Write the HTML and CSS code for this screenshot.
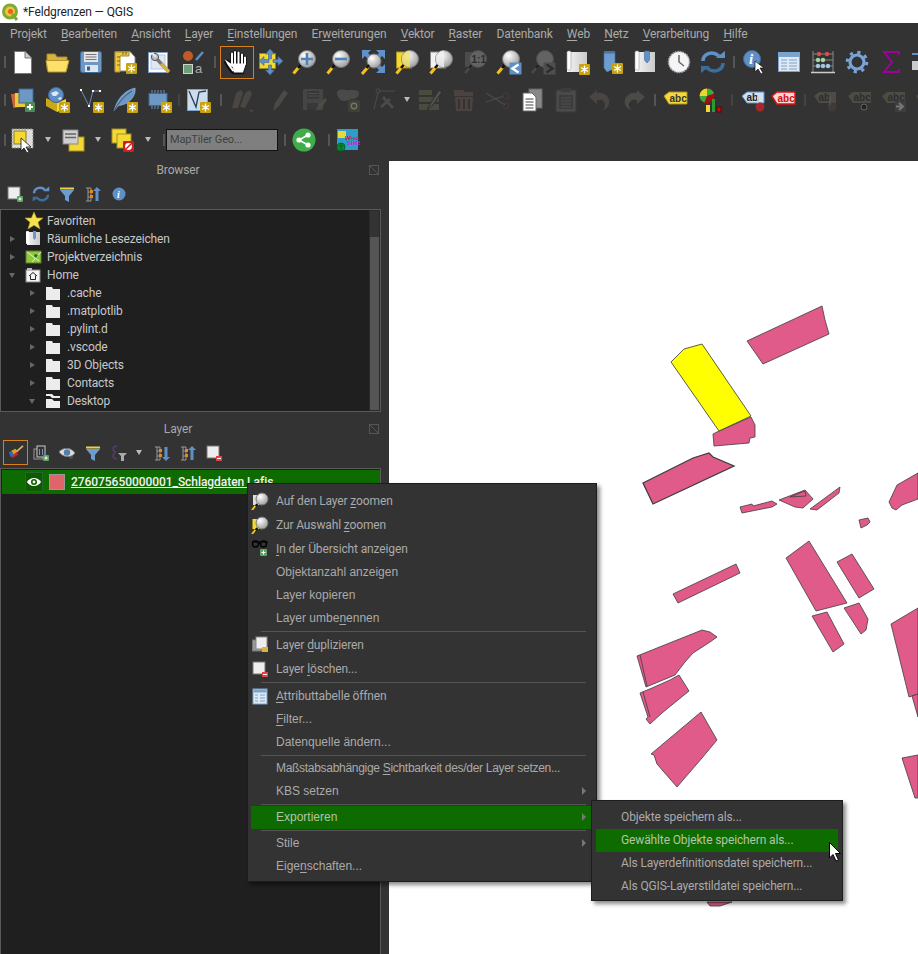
FILE: index.html
```
<!DOCTYPE html>
<html lang="de">
<head>
<meta charset="utf-8">
<title>*Feldgrenzen — QGIS</title>
<link rel="stylesheet" href="styles.css">
</head>
<body>
<svg class="defs" xmlns="http://www.w3.org/2000/svg">
<defs>
<radialGradient id="lens" cx=".35" cy=".3" r=".85"><stop offset="0" stop-color="#fff"/><stop offset="1" stop-color="#8f8f8f"/></radialGradient>
<linearGradient id="paper" x1="0" x2="1" y1="0" y2="0"><stop offset="0" stop-color="#f6f6f6"/><stop offset="1" stop-color="#c9c9c9"/></linearGradient>
<g id="star"><rect width="11" height="11" rx="1" fill="#c9a20f"/><path d="M5.5 1.5v8M2 3.5l7 4M9 3.5l-7 4" stroke="#fff" stroke-width="1.4"/></g>
<g id="mag"><path d="M1.5 24.5l5-6" stroke="#f5c21b" stroke-width="3"/><path d="M6 19l3-3.5" stroke="#111" stroke-width="2.5"/><circle cx="15" cy="10" r="8.5" fill="url(#lens)" stroke="#777"/></g>
<g id="magdim"><path d="M2 24l7-8" stroke="#4a4a44" stroke-width="2.6"/><path d="M6 19l3-3" stroke="#222" stroke-width="2.4"/><circle cx="15" cy="10" r="8.5" fill="#636363" stroke="#4c4c4c"/></g>
<g id="plusb"><rect width="10" height="10" rx="1" fill="#4f8a55"/><path d="M5 2v6M2 5h6" stroke="#fff" stroke-width="1.8"/></g>

<symbol id="doc" viewBox="0 0 26 26"><path d="M4.500 2.500H15L21.500 9V24.500H4.500Z" fill="#fff" stroke="#777"/><path d="M15 2.500V9H21.500" fill="#ccc" stroke="#777"/></symbol>
<symbol id="folder" viewBox="0 0 26 26"><path d="M3 20V5h8l2 3h10v12Z" fill="#d8b43c" stroke="#a88a2c"/><path d="M2 11.500H25L22 23H4Z" fill="#fde069" stroke="#b3962f"/></symbol>
<symbol id="save" viewBox="0 0 26 26"><rect x="2.500" y="2.500" width="21" height="21" rx="2" fill="#6d97c4" stroke="#3f6a96"/><rect x="6" y="3" width="14" height="10" fill="#e6e6e6"/><path d="M7.500 5.500h11M7.500 8h11M7.500 10.500h11" stroke="#777"/><rect x="7" y="16" width="13" height="7" fill="#dde6ef"/><rect x="9" y="17.500" width="3" height="4" fill="#3f5f80"/></symbol>
<symbol id="newlay" viewBox="0 0 26 26"><path d="M3 2.500H18L23 8V22H3Z" fill="#fff" stroke="#888"/><path d="M3 3h14v4H8v16H3Z" fill="#f2c93b" stroke="#a88a2c"/><path d="M5 8h3M5 12h3M5 16h3M11 3v3M14 3v3" stroke="#7b6518"/><use href="#star" x="14" y="14"/></symbol>
<symbol id="laymgr" viewBox="0 0 26 26"><rect x="2.500" y="3.500" width="19" height="20" fill="#fff" stroke="#7f9cc0"/><rect x="5" y="6" width="14" height="14" fill="#dfe8f4" stroke="#b5c7de"/><path d="M9 8l14 15" stroke="#777" stroke-width="3.400"/><path d="M15 15l8 8" stroke="#d9b23a" stroke-width="3.400"/><circle cx="9" cy="8" r="3.600" fill="#bbb" stroke="#555"/><path d="M6 4l4 4" stroke="#dfe8f4" stroke-width="2.400"/></symbol>
<symbol id="styl" viewBox="0 0 26 26"><circle cx="8" cy="7" r="5" fill="#c05a28"/><path d="M16 11l7-8" stroke="#5d8fc7" stroke-width="2.400"/><rect x="3.500" y="15.500" width="9" height="9" fill="#6e9f78" stroke="#c8d6c8"/><text class="t" x="15" y="24" font-size="13" fill="#aaa">a</text></symbol>
<symbol id="hand" viewBox="0 0 26 26"><path d="M8 22c-2-3-5-6-6-9l2-1 4 3V4M11 14V2.500M14.500 14V3M18 14V5M21 15V8" fill="none" stroke="#111" stroke-width="3.600" stroke-linecap="round"/><path d="M8 14h13v3l-2 7H9Z" fill="#111" stroke="#111" stroke-width="1.500"/><path d="M8 14h13v3l-2 6H10Z" fill="#fff"/><path d="M9 21c-2-3-4-5-5.500-8L8 16V4M11 14V2.500M14.500 14V3M18 14V5M21 15V8" fill="none" stroke="#fff" stroke-width="2" stroke-linecap="round"/></symbol>
<symbol id="move" viewBox="0 0 26 26"><rect x="1.500" y="4.500" width="16" height="15" fill="#f6d92e" stroke="#9a8b1c" stroke-dasharray="2 1"/><path d="M12 0l4.500 5h-3v5h-3V5h-3ZM12 26l4.500-5h-3v-5h-3v5h-3ZM1 12l5-4.500v3h5v3H6v3ZM25 12l-5-4.500v3h-5v3h5v3Z" fill="#5f8fc6" stroke="#3f6a96" stroke-width=".6"/></symbol>
<symbol id="zin" viewBox="0 0 26 26"><use href="#mag"/><path d="M9 10h12M15 4v12" stroke="#4f82b8" stroke-width="2.600"/></symbol>
<symbol id="zout" viewBox="0 0 26 26"><use href="#mag"/><path d="M9 10h12" stroke="#4f82b8" stroke-width="2.600"/></symbol>
<symbol id="zfull" viewBox="0 0 26 26"><path d="M2 1h9L8 4l4 4-3 3-4-4-3 3ZM25 1v9l-3-3-4 4-3-3 4-4-3-3ZM25 24h-9l3-3-4-4 3-3 4 4 3-3ZM4 11" fill="#5f90c7"/><circle cx="14" cy="12" r="7" fill="url(#lens)" stroke="#777"/><path d="M2 25l6-7" stroke="#f5c21b" stroke-width="3"/><path d="M6.500 19l2.500-3" stroke="#111" stroke-width="2.400"/></symbol>
<symbol id="zsel" viewBox="0 0 26 26"><rect x="2.500" y="3" width="15" height="16" fill="#f3d92f" stroke="#a89020"/><use href="#mag" x="1"/><path d="M16 1.500a8.500 8.500 0 0 0 0 17Z" fill="#f3df5c" opacity=".75"/></symbol>
<symbol id="zlay" viewBox="0 0 26 26"><rect x="2.500" y="3" width="15" height="16" fill="#f2f2f2" stroke="#888"/><use href="#mag" x="1"/><path d="M16 1.500a8.500 8.500 0 0 0 0 17Z" fill="#eee" opacity=".8"/></symbol>
<symbol id="z11" viewBox="0 0 26 26"><rect x="3" y="3" width="14" height="15" fill="#4c4c4c"/><use href="#magdim" x="1"/><text class="t b" x="9.500" y="13.500" font-size="10" fill="#2c2c2c">1:1</text></symbol>
<symbol id="zlast" viewBox="0 0 26 26"><use href="#mag"/><rect x="13.500" y="13.500" width="12" height="12" fill="#5f90c7"/><path d="M22.500 15.500l-6 4 6 4" fill="none" stroke="#fff" stroke-width="2.400"/></symbol>
<symbol id="znext" viewBox="0 0 26 26"><use href="#magdim"/><rect x="13.500" y="13.500" width="12" height="12" fill="#4e4e4e"/><path d="M16.500 15.500l6 4-6 4" fill="none" stroke="#2c2c2c" stroke-width="2.400"/></symbol>
<symbol id="scroll" viewBox="0 0 26 26"><rect x="3" y="3" width="20" height="20" fill="url(#paper)"/><rect x="3" y="2" width="4" height="19" rx="1.500" fill="#fff" stroke="#999" stroke-width=".6"/><use href="#star" x="15" y="15"/></symbol>
<symbol id="ribbon" viewBox="0 0 26 26"><path d="M6 3h11v19l-4-1-4 2-3-4Z" fill="#6d9ccf" stroke="#47749f" stroke-width=".6"/><rect x="6" y="2" width="11" height="2.500" fill="#47749f"/><use href="#star" x="14" y="14"/></symbol>
<symbol id="scrib" viewBox="0 0 26 26"><rect x="3" y="3" width="20" height="20" fill="url(#paper)"/><rect x="3" y="2" width="4" height="19" rx="1.500" fill="#fff" stroke="#999" stroke-width=".6"/><path d="M12.500 2h5v9l-2.500 3-2.500-3Z" fill="#5f90c7" stroke="#3f6a96" stroke-width=".6"/></symbol>
<symbol id="clock" viewBox="0 0 26 26"><circle cx="13" cy="13" r="10.500" fill="#f5f5f5" stroke="#9aa3ad" stroke-width="1.600" stroke-dasharray="1.500 1"/><path d="M13 6v7l5 4" fill="none" stroke="#666" stroke-width="1.500"/></symbol>
<symbol id="refresh" viewBox="0 0 26 26"><path d="M3 12C3 5 12 1 19 7" fill="none" stroke="#5f90c7" stroke-width="3.600"/><path d="M16 9h9V2Z" fill="#5f90c7"/><path d="M23 14c0 7-9 11-16 5" fill="none" stroke="#3d6d9f" stroke-width="3.600"/><path d="M10 17H1v7Z" fill="#3d6d9f"/></symbol>
<symbol id="info" viewBox="0 0 26 26"><circle cx="10" cy="10" r="8.500" fill="#5f8fc4" stroke="#3f6a96"/><text class="ts" x="7" y="15" font-size="15" fill="#fff">i</text><path d="M13 12v11l3-3 3 5 2-1-3-5h4Z" fill="#fff" stroke="#111" stroke-width=".7"/></symbol>
<symbol id="table" viewBox="0 0 26 26"><rect x="2.500" y="3.500" width="21" height="19" fill="#dfe9f4" stroke="#7ca3cc"/><rect x="3" y="4" width="20" height="4" fill="#7ca3cc"/><path d="M5 11h6M13 11h8M5 14h6M13 14h8M5 17h6M13 17h8M5 20h6M13 20h8" stroke="#7ca3cc" stroke-width="1.200"/></symbol>
<symbol id="abacus" viewBox="0 0 26 26"><path d="M3 2v21M23 2v21M3 5h20M3 11h20M3 17h20" stroke="#888"/><path d="M1 23.500h24" stroke="#ccc" stroke-width="1.500"/><circle cx="9" cy="5" r="2.200" fill="#e0494f"/><circle cx="17" cy="5" r="2.200" fill="#e0494f"/><circle cx="8" cy="11" r="2.200" fill="#9fd8a2"/><circle cx="13" cy="11" r="2.200" fill="#9fd8a2"/><circle cx="8" cy="17" r="2.200" fill="#9fc8e8"/><circle cx="13" cy="17" r="2.200" fill="#9fc8e8"/><circle cx="18" cy="17" r="2.200" fill="#9fc8e8"/></symbol>
<symbol id="gear" viewBox="0 0 26 26"><circle cx="13" cy="13" r="7" fill="none" stroke="#7aa3d8" stroke-width="3.200"/><circle cx="13" cy="13" r="9.800" fill="none" stroke="#7aa3d8" stroke-width="3" stroke-dasharray="3.200 4.500"/></symbol>
<symbol id="sigma" viewBox="0 0 26 26"><path d="M21 6V3H6l8 10-8 10h15v-3" fill="none" stroke="#a000a0" stroke-width="2"/></symbol>
<symbol id="clip" viewBox="0 0 26 26"><path d="M0 5h12" stroke="#5f90c7" stroke-width="2"/><rect x="0" y="12" width="12" height="9" fill="#ccc"/></symbol>

<symbol id="addl" viewBox="0 0 26 26"><rect x="2" y="6" width="14" height="14" fill="#c7692c" transform="rotate(-10 9 13)"/><rect x="5" y="6" width="14" height="14" fill="#ecc93b"/><rect x="9" y="2" width="14" height="14" fill="#6d97c4" stroke="#3f6a96"/><use href="#plusb" x="15" y="15"/></symbol>
<symbol id="globe" viewBox="0 0 26 26"><path d="M2 11l11 5v9L2 19Z" fill="#c9a819"/><path d="M13 16l9-4v9l-9 4Z" fill="#f3d935"/><circle cx="12" cy="8" r="7.500" fill="#5f8fc4" stroke="#3f6a96"/><path d="M7 6l5-2 3 2-3 3-3 0ZM14 11l3-1 1 2-3 1Z" fill="#dfe8f4"/><use href="#star" x="15" y="15"/></symbol>
<symbol id="vert" viewBox="0 0 26 26"><path d="M3 3l8 16 4-15h7" fill="none" stroke="#7aa3d8" stroke-width=".8"/><g fill="#fff"><rect x="2" y="2" width="2" height="2"/><rect x="10" y="18" width="2" height="2"/><rect x="14" y="3" width="2" height="2"/><rect x="21" y="3" width="2" height="2"/></g><use href="#star" x="15" y="15"/></symbol>
<symbol id="feather" viewBox="0 0 26 26"><path d="M2 24C5 13 11 4 23 1c1 6-3 12-8 15-4 2-7 2-9 3Z" fill="#6d97c4" stroke="#9ec0e6" stroke-width=".6"/><path d="M2 24C7 15 12 9 20 4" stroke="#28405c" fill="none" stroke-width=".8"/><use href="#star" x="15" y="15"/></symbol>
<symbol id="chip" viewBox="0 0 26 26"><path d="M6 3v4M9 3v4M12 3v4M15 3v4M18 3v4M6 18v4M9 18v4M12 18v4" stroke="#6d97c4"/><rect x="3" y="6.500" width="18" height="12" fill="#6d97c4" stroke="#3f6a96"/><use href="#star" x="15" y="15"/></symbol>
<symbol id="vbox" viewBox="0 0 26 26"><rect x="2.500" y="2.500" width="20" height="21" fill="#cddceb" stroke="#7ca3cc"/><path d="M4 4l7 16 3-15 7-1" fill="none" stroke="#26405c" stroke-width="1.300"/><use href="#star" x="15" y="15"/></symbol>

<symbol id="dpen2" viewBox="0 0 26 26"><path d="M2 21l4-15 5-3 2 3-5 15ZM10 20l5-14 5-3 2 4-7 14Z" fill="#4a4743"/><path d="M19 23h5l-2.500 2.500Z" fill="#4a4743"/></symbol>
<symbol id="dpen" viewBox="0 0 26 26"><path d="M6 24l2-8L17 3l4 3-9 13Z" fill="#4a4a46"/></symbol>
<symbol id="dsave" viewBox="0 0 26 26"><rect x="2" y="2" width="20" height="21" rx="1" fill="#454545"/><path d="M6 4h12v8H6ZM6 16h11v7H6Z" fill="#383838"/><path d="M7 6.500h10M7 9h10" stroke="#4e4e4e"/><path d="M15 24l2-6 7-7 2 2-6 8Z" fill="#4e4a44"/></symbol>
<symbol id="dblob" viewBox="0 0 26 26"><path d="M2 6c0-4 6-4 9-3 4 1 8-1 12 1 3 3-1 8-5 8-4 0-5 2-9 2S2 10 2 6Z" fill="#4a4a4a"/><rect x="13" y="13" width="12" height="12" rx="1" fill="#414038"/><circle cx="19" cy="19" r="2.700" fill="none" stroke="#77756a" stroke-width="1.400"/></symbol>
<symbol id="dvert" viewBox="0 0 26 26"><circle cx="7" cy="4" r="2" fill="none" stroke="#4d4d4d"/><path d="M7 6L3 22M9 4h15" stroke="#4d4d4d"/><path d="M10 20l9-8M12 10l10 11" stroke="#4a4a46" stroke-width="3"/></symbol>
<symbol id="dtab" viewBox="0 0 26 26"><path d="M2 3h13v5H2ZM2 10h20v5H2ZM2 17h20v6H2Z" fill="#4a4a3e"/><path d="M10 23l3-6L22 3l3 2-9 13Z" fill="#51504e" stroke="#2e2e2e"/></symbol>
<symbol id="dtrash" viewBox="0 0 26 26"><path d="M3 3h9l2 2h8v4H3Z" fill="#4a4340"/><path d="M4 10h18l-1 14H5Z" fill="#4a4340"/><path d="M8 12v10M13 12v10M18 12v10" stroke="#322e2c" stroke-width="1.500"/></symbol>
<symbol id="dcut" viewBox="0 0 26 26"><path d="M1 6l19 12M1 15l18-6" stroke="#4c4c4c" stroke-width="1.200"/><circle cx="21" cy="19" r="3" fill="none" stroke="#473838"/><circle cx="21" cy="9" r="3" fill="none" stroke="#473838"/></symbol>
<symbol id="copy" viewBox="0 0 26 26"><rect x="10" y="2" width="13" height="19" fill="#888" stroke="#666"/><path d="M4 6h9l4 4v14H4Z" fill="#fff" stroke="#666"/><path d="M6.500 12h8M6.500 15h8M6.500 18h8M6.500 21h8" stroke="#444"/></symbol>
<symbol id="paste" viewBox="0 0 26 26"><rect x="3" y="3" width="20" height="22" rx="1" fill="#4a4a48" stroke="#3a3a3a"/><rect x="8" y="1" width="10" height="4" fill="#3c3c3c"/><rect x="6" y="8" width="14" height="14" fill="#3c3c3c"/><path d="M8 11h10M8 14h10M8 17h10M8 20h10" stroke="#4e4e4e"/></symbol>
<symbol id="undo" viewBox="0 0 26 26"><path d="M10 3L2 10l8 7v-4c5-1 8 1 8 5 0 2-1 4-3 5 6-1 8-6 7-10-1-5-6-8-12-7Z" fill="#4a4542"/></symbol>
<symbol id="redo" viewBox="0 0 26 26"><path d="M16 3l8 7-8 7v-4c-5-1-8 1-8 5 0 2 1 4 3 5-6-1-8-6-7-10 1-5 6-8 12-7Z" fill="#4a4a46"/></symbol>
<symbol id="abc" viewBox="0 0 26 26"><path d="M1 9l5-4h18v12H6Z" fill="#f5d93a" stroke="#a89020"/><text class="t b" x="6.500" y="14.500" font-size="10" fill="#333">abc</text></symbol>
<symbol id="pie" viewBox="0 0 26 26"><circle cx="10" cy="9" r="7.500" fill="#a01010"/><path d="M10 9V1.500a7.500 7.500 0 0 1 7 5ZM10 9l-7.500 0a7.500 7.500 0 0 0 5 6.500Z" fill="#3fa93f"/><path d="M10 9V1.500a7.500 7.500 0 0 0-7.500 7.500Z" fill="#e8d82e"/><rect x="9" y="18" width="4" height="7" fill="#f3d935"/><rect x="15" y="12" width="3" height="13" fill="#2a9b30"/><rect x="20" y="20" width="4" height="5" fill="#c01010" stroke="#600"/></symbol>
<symbol id="abpin" viewBox="0 0 26 26"><path d="M1 9l5-4h17v11H6Z" fill="#cfe1f4" stroke="#5f90c7"/><text class="t b" x="5.500" y="14" font-size="10" fill="#222">ab</text><path d="M17 9v9" stroke="#ccc" stroke-width="2"/><circle cx="19" cy="20" r="4.500" fill="#a02a2e"/></symbol>
<symbol id="abcr" viewBox="0 0 26 26"><path d="M1 9l5-4h18v12H6Z" fill="#f8d8d8" stroke="#e01010" stroke-width="1.400"/><text class="t b" x="6.500" y="14.500" font-size="10" fill="#d01010">abc</text></symbol>
<symbol id="dabpin" viewBox="0 0 26 26"><path d="M1 9l5-4h17v11H6Z" fill="#4c4c44"/><text class="t b" x="5.500" y="14" font-size="10" fill="#2c2c2c">ab</text><circle cx="19" cy="20" r="4.500" fill="#413a3a"/><path d="M17 9v9" stroke="#555" stroke-width="1.600"/></symbol>
<symbol id="dabceye" viewBox="0 0 26 26"><path d="M1 9l5-4h18v11H6Z" fill="#4c4c44"/><text class="t b" x="6.500" y="14" font-size="10" fill="#2c2c2c">abc</text><circle cx="17" cy="20" r="3" fill="#222" stroke="#666"/></symbol>
<symbol id="dabcarr" viewBox="0 0 26 26"><path d="M1 9l5-4h18v11H6Z" fill="#4c4c44"/><text class="t b" x="6.500" y="14" font-size="10" fill="#2c2c2c">abc</text><rect x="14" y="14" width="11" height="11" rx="1" fill="#3e3e3e"/><path d="M15 19.500h5M18 16l4 3.500-4 3.500" fill="none" stroke="#777" stroke-width="2"/></symbol>

<symbol id="sel" viewBox="0 0 26 26"><rect x="2" y="2" width="21" height="19" fill="#dedede" stroke="#888" stroke-dasharray="2 1"/><rect x="4" y="4" width="12" height="13" fill="#f6d92e" stroke="#8b7a1c"/><path d="M11 11v13l3-3 3 5 2-1-3-5h5Z" fill="#fff" stroke="#111" stroke-width=".8"/></symbol>
<symbol id="lyr" viewBox="0 0 26 26"><rect x="9" y="10" width="15" height="14" fill="#f3d935" stroke="#a89020"/><rect x="3" y="3" width="15" height="14" fill="#cfcfcf" stroke="#888"/><path d="M5 7h11M5 10.500h11" stroke="#666" stroke-width="1.400"/></symbol>
<symbol id="desel" viewBox="0 0 26 26"><rect x="2" y="2" width="14" height="14" fill="#f3d935" stroke="#a89020"/><rect x="7" y="7" width="14" height="14" fill="#f3d935" stroke="#a89020"/><rect x="13" y="14" width="11" height="11" rx="1" fill="#cc1f1f"/><circle cx="18.500" cy="19.500" r="3.400" fill="#fff"/><path d="M16 22l5-5" stroke="#cc1f1f" stroke-width="1.400"/></symbol>
<symbol id="share" viewBox="0 0 26 26"><circle cx="13" cy="13" r="11.500" fill="#3fae4a"/><path d="M8 13l9-5M8 13l9 5" stroke="#fff" stroke-width="1.500"/><circle cx="8" cy="13" r="2.600" fill="#fff"/><circle cx="17" cy="8" r="2.600" fill="#fff"/><circle cx="17" cy="18" r="2.600" fill="#fff"/></symbol>
<symbol id="wisc" viewBox="0 0 26 26"><rect x="3" y="2" width="21" height="21" fill="#2b9fc9"/><rect x="4" y="4" width="8" height="7" fill="#e8d83a"/><text class="t b" x="11" y="12.500" font-size="6" fill="#e01030">Wisc</text><text class="t b" x="13" y="18" font-size="6" fill="#d020e0">SIMS</text><circle cx="7" cy="20" r="4" fill="#0c8a20" stroke="#063"/><path d="M5 19h4M7 17v6" stroke="#063"/></symbol>

<symbol id="padd" viewBox="0 0 18 18"><rect x="2" y="2" width="12" height="12" fill="#eee" stroke="#777"/><rect x="11" y="11" width="6" height="6" rx="1" fill="#5fa369"/><path d="M14 12.500v3M12.500 14h3" stroke="#fff"/></symbol>
<symbol id="pfilter" viewBox="0 0 18 18"><path d="M2 3.500h14" stroke="#ecd24b" stroke-width="2"/><path d="M2 5h14l-5 6v6l-4-2v-4Z" fill="#6d9ccf"/></symbol>
<symbol id="pcoll" viewBox="0 0 18 18"><path d="M2 3h5v13H2M4 3v13M4 7h3M4 12h3" fill="none" stroke="#999"/><rect x="6" y="5" width="3" height="3" fill="#e28a1c"/><rect x="6" y="10" width="3" height="3" fill="#e28a1c"/><path d="M13 2l4 4h-2.500v10h-3V6H9Z" fill="#5f90c7"/></symbol>
<symbol id="pexp" viewBox="0 0 18 18"><path d="M2 3h5v13H2M4 3v13M4 7h3M4 12h3" fill="none" stroke="#999"/><rect x="6" y="5" width="3" height="3" fill="#e28a1c"/><rect x="6" y="10" width="3" height="3" fill="#e28a1c"/><path d="M13 17l4-4h-2.500V3h-3v10H9Z" fill="#5f90c7"/></symbol>
<symbol id="pinfo" viewBox="0 0 18 18"><circle cx="9" cy="9" r="6.500" fill="#5f8fc4"/><text class="ts" x="7" y="13" font-size="10" fill="#fff">i</text></symbol>
<symbol id="brush" viewBox="0 0 18 18"><path d="M2 9l6-3 4 5-6 4Z" fill="#c22"/><path d="M2 9l2 5 4-2-3-5Z" fill="#2a6db0"/><path d="M5 7l4-2 2 3-4 3Z" fill="#e0a020"/><path d="M10 8l7-6" stroke="#d8b860" stroke-width="1.800"/></symbol>
<symbol id="lgadd" viewBox="0 0 18 18"><rect x="2" y="5" width="9" height="10" fill="none" stroke="#999"/><rect x="5" y="2" width="8" height="11" fill="#333" stroke="#ccc"/><path d="M7.500 5v6M10.500 5v6" stroke="#6d97c4"/><rect x="11" y="11" width="6" height="6" rx="1" fill="#5fa369"/><path d="M14 12.500v3M12.500 14h3" stroke="#fff"/></symbol>
<symbol id="peye" viewBox="0 0 18 18"><path d="M1 8c4-5 12-5 16 1-3 5-12 5-16-1Z" fill="#ddd" stroke="#777"/><circle cx="9" cy="8.500" r="3.200" fill="#4f7fb0"/><path d="M11 14l4-2v2l-2 1Z" fill="#555"/></symbol>
<symbol id="peps" viewBox="0 0 18 18"><path d="M7 2C2 2 2 7 6 8c-4 1-4 7 1 7" fill="none" stroke="#5a3a6a" stroke-width="1.600"/><path d="M8 9h9l-3 3v5h-3v-5Z" fill="#aaa"/></symbol>
<symbol id="prem" viewBox="0 0 18 18"><rect x="2" y="2" width="12" height="12" fill="#eee" stroke="#777"/><rect x="11" y="12" width="6" height="5" fill="#e0424a"/><path d="M12 14.500h4" stroke="#fff"/></symbol>

<symbol id="mzl" viewBox="0 0 18 18"><rect x="2" y="3" width="8" height="10" fill="#ddd"/><path d="M1 18l4-5" stroke="#f5c21b" stroke-width="2"/><path d="M4.500 14l2-2" stroke="#111" stroke-width="2"/><circle cx="11" cy="7" r="6" fill="url(#lens)" stroke="#777"/></symbol>
<symbol id="mzs" viewBox="0 0 18 18"><rect x="1.500" y="3" width="9" height="10" fill="#f3d92f"/><path d="M1 18l4-5" stroke="#f5c21b" stroke-width="2"/><path d="M4.500 14l2-2" stroke="#111" stroke-width="2"/><circle cx="11" cy="7" r="6" fill="url(#lens)" stroke="#777"/></symbol>
<symbol id="mglass" viewBox="0 0 18 18"><circle cx="4.500" cy="4" r="3" fill="none" stroke="#000" stroke-width="1.400"/><circle cx="12.500" cy="4" r="3" fill="none" stroke="#000" stroke-width="1.400"/><path d="M1 2h16M7.500 3.500h2" stroke="#000" stroke-width="1.200"/><rect x="9" y="9" width="7" height="7" rx="1" fill="#5fa369"/><path d="M12.500 10.500v4M10.500 12.500h4" stroke="#fff"/></symbol>
<symbol id="mdup" viewBox="0 0 18 18"><rect x="1.500" y="4" width="11" height="11" fill="#999" stroke="#777"/><rect x="5" y="1" width="11" height="12" fill="#eee" stroke="#888"/><rect x="11" y="11" width="6" height="5" fill="#d9b63a"/></symbol>
<symbol id="mtab" viewBox="0 0 18 18"><rect x="2" y="2" width="14" height="15" fill="#dfe9f4" stroke="#7ca3cc"/><rect x="2.500" y="2.500" width="13" height="3" fill="#7ca3cc"/><path d="M4 8h3M9 8h5M4 11h3M9 11h5M4 14h3M9 14h5" stroke="#7ca3cc"/></symbol>
<symbol id="fav" viewBox="0 0 18 18"><path d="M9 0l2.600 6H18l-5 4.200L15 17l-6-3.700L3 17l2-6.800L0 6h6.400Z" fill="#f6e24a" stroke="#b9a02a" stroke-width=".6"/></symbol>
<symbol id="bm" viewBox="0 0 18 18"><rect x="2" y="2" width="13" height="13" fill="url(#paper)"/><rect x="1" y="1" width="3" height="13" rx="1" fill="#fff"/><path d="M8 1h3v7l-1.500 2L8 8Z" fill="#6d97c4"/></symbol>
<symbol id="proj" viewBox="0 0 18 18"><rect x="1" y="3" width="15" height="12" fill="#92c83e" stroke="#5a7a28"/><path d="M2 4l12 9M16 4l-9 10" stroke="#e8f0d0"/><path d="M10 6l3 1-2 3-2-2Z" fill="#0c7a14"/></symbol>
<symbol id="home" viewBox="0 0 18 18"><rect x="1" y="4" width="14" height="12" fill="#f4f4f4" stroke="#888"/><rect x="2" y="2" width="5" height="2" fill="#bbb"/><path d="M4 10l4-3.500 4 3.500M5.500 9.500v4h5v-4" fill="none" stroke="#222"/></symbol>
<symbol id="fold" viewBox="0 0 18 18"><path d="M1 3h6l1 2h7v11H1Z" fill="#ececec"/></symbol>
<symbol id="foldo" viewBox="0 0 18 18"><path d="M1 2h6l2 2h6v2H7L5 4H1ZM1 7h6l2 2h6v7H1Z" fill="#ececec"/></symbol>
</defs>
</svg>

<header class="titlebar">
  <svg class="logo" viewBox="0 0 18 18"><circle cx="9" cy="8.500" r="6.500" fill="#f3c23a" stroke="#7fab33" stroke-width="3"/><circle cx="9.500" cy="8.500" r="2.500" fill="#e0632a"/><path d="M11 11l5 6" stroke="#7fab33" stroke-width="3"/></svg>
  <span>*Feldgrenzen — QGIS</span>
</header>

<nav class="menubar">
  <span>Projekt</span><span><u>B</u>earbeiten</span><span><u>A</u>nsicht</span><span><u>L</u>ayer</span><span><u>E</u>instellungen</span><span>Er<u>w</u>eiterungen</span><span><u>V</u>ektor</span><span><u>R</u>aster</span><span>Da<u>t</u>enbank</span><span><u>W</u>eb</span><span><u>N</u>etz</span><span><u>V</u>erarbeitung</span><span><u>H</u>ilfe</span>
</nav>

<section class="tb tb1">
  <i class="hd"></i>
  <svg class="ic"><use href="#doc"/></svg><svg class="ic"><use href="#folder"/></svg><svg class="ic"><use href="#save"/></svg><svg class="ic"><use href="#newlay"/></svg><svg class="ic"><use href="#laymgr"/></svg><svg class="ic"><use href="#styl"/></svg>
  <i class="sp w10"><b class="hd"></b></i>
  <svg class="ic on"><use href="#hand"/></svg><svg class="ic"><use href="#move"/></svg><svg class="ic"><use href="#zin"/></svg><svg class="ic"><use href="#zout"/></svg><svg class="ic"><use href="#zfull"/></svg><svg class="ic"><use href="#zsel"/></svg><svg class="ic"><use href="#zlay"/></svg><svg class="ic"><use href="#z11"/></svg><svg class="ic"><use href="#zlast"/></svg><svg class="ic"><use href="#znext"/></svg><svg class="ic"><use href="#scroll"/></svg><svg class="ic"><use href="#ribbon"/></svg><svg class="ic"><use href="#scrib"/></svg><svg class="ic"><use href="#clock"/></svg><svg class="ic"><use href="#refresh"/></svg>
  <i class="sp w8"><b class="hd"></b></i>
  <svg class="ic"><use href="#info"/></svg><svg class="ic"><use href="#table"/></svg><svg class="ic"><use href="#abacus"/></svg><svg class="ic"><use href="#gear"/></svg><svg class="ic"><use href="#sigma"/></svg><svg class="ic"><use href="#clip"/></svg>
</section>

<section class="tb tb2">
  <i class="hd"></i>
  <svg class="ic"><use href="#addl"/></svg><svg class="ic"><use href="#globe"/></svg><svg class="ic"><use href="#vert"/></svg><svg class="ic"><use href="#feather"/></svg><svg class="ic"><use href="#chip"/></svg>
  <i class="sp w5"><b class="hd dk"></b></i>
  <svg class="ic"><use href="#vbox"/></svg>
  <i class="sp w11"><b class="hd"></b></i>
  <svg class="ic"><use href="#dpen2"/></svg>
  <i class="sp w3"></i>
  <svg class="ic"><use href="#dpen"/></svg><svg class="ic"><use href="#dsave"/></svg><svg class="ic"><use href="#dblob"/></svg>
  <i class="sp w2"></i>
  <svg class="ic"><use href="#dvert"/></svg>
  <i class="ar w12"></i>
  <svg class="ic"><use href="#dtab"/></svg><svg class="ic"><use href="#dtrash"/></svg><svg class="ic"><use href="#dcut"/></svg><svg class="ic"><use href="#copy"/></svg><svg class="ic"><use href="#paste"/></svg><svg class="ic"><use href="#undo"/></svg><svg class="ic"><use href="#redo"/></svg>
  <i class="sp w8"><b class="hd"></b></i>
  <svg class="ic"><use href="#abc"/></svg>
  <svg class="ic"><use href="#pie"/></svg>
  <i class="sp w10"><b class="hd dk"></b></i>
  <svg class="ic nr"><use href="#abpin"/></svg>
  <svg class="ic"><use href="#abcr"/></svg>
  <i class="sp w8"><b class="hd dk"></b></i>
  <svg class="ic"><use href="#dabpin"/></svg>
  <svg class="ic"><use href="#dabceye"/></svg>
  <svg class="ic"><use href="#dabcarr"/></svg>
  <svg class="ic"><use href="#dabcarr"/></svg>
</section>

<section class="tb tb3">
  <i class="hd"></i>
  <svg class="ic"><use href="#sel"/></svg><i class="ar w16"></i>
  <svg class="ic"><use href="#lyr"/></svg><i class="ar w16"></i>
  <svg class="ic"><use href="#desel"/></svg><i class="ar w16"></i>
  <i class="hd h-search"></i>
  <div class="search">MapTiler Geo...</div>
  <i class="hd gapb"></i>
  <svg class="ic share"><use href="#share"/></svg>
  <i class="hd h-wisc"></i>
  <svg class="ic"><use href="#wisc"/></svg>
</section>

<main class="work">
  <aside class="side">
    <div class="dock-title"><span>Browser</span><i class="float"></i></div>
    <div class="ptb ptb-b">
      <svg class="pi"><use href="#padd"/></svg><svg class="pi"><use href="#refresh"/></svg><svg class="pi"><use href="#pfilter"/></svg><svg class="pi"><use href="#pcoll"/></svg><svg class="pi"><use href="#pinfo"/></svg>
    </div>
    <div class="tree browser">
      <ul class="rows">
        <li class="row"><i class="tw none"></i><svg class="ti"><use href="#fav"/></svg>Favoriten</li>
        <li class="row"><i class="tw"></i><svg class="ti"><use href="#bm"/></svg>Räumliche Lesezeichen</li>
        <li class="row"><i class="tw"></i><svg class="ti"><use href="#proj"/></svg>Projektverzeichnis</li>
        <li class="row"><i class="tw open"></i><svg class="ti"><use href="#home"/></svg>Home</li>
        <li class="row sub"><i class="tw"></i><svg class="ti"><use href="#fold"/></svg>.cache</li>
        <li class="row sub"><i class="tw"></i><svg class="ti"><use href="#fold"/></svg>.matplotlib</li>
        <li class="row sub"><i class="tw"></i><svg class="ti"><use href="#fold"/></svg>.pylint.d</li>
        <li class="row sub"><i class="tw"></i><svg class="ti"><use href="#fold"/></svg>.vscode</li>
        <li class="row sub"><i class="tw"></i><svg class="ti"><use href="#fold"/></svg>3D Objects</li>
        <li class="row sub"><i class="tw"></i><svg class="ti"><use href="#fold"/></svg>Contacts</li>
        <li class="row sub"><i class="tw open"></i><svg class="ti"><use href="#foldo"/></svg>Desktop</li>
      </ul>
      <div class="scroll"><div class="thumb"></div></div>
    </div>
    <div class="dock-title second"><span>Layer</span><i class="float"></i></div>
    <div class="ptb ptb-l">
      <svg class="pi on"><use href="#brush"/></svg><svg class="pi"><use href="#lgadd"/></svg><svg class="pi"><use href="#peye"/></svg><svg class="pi"><use href="#pfilter"/></svg><svg class="pi"><use href="#peps"/></svg><i class="ar w10"></i><svg class="pi tight"><use href="#pexp"/></svg><svg class="pi"><use href="#pcoll"/></svg><svg class="pi"><use href="#prem"/></svg>
    </div>
    <div class="tree layers">
      <div class="layer-row">
        <span class="eye"><svg viewBox="0 0 18 18"><path d="M1 9c4-6 12-6 16 0-4 6-12 6-16 0Z" fill="#fff"/><circle cx="9" cy="9" r="3.400" fill="#0d5a00"/><circle cx="9" cy="9" r="1.600" fill="#fff"/></svg></span>
        <span class="swatch"></span>
        <span class="lname">276075650000001_Schlagdaten Lafis</span>
      </div>
    </div>
  </aside>
  <div class="split"></div>
  <div class="map">
    <svg viewBox="389 161 529 793" class="mapsvg">
      <g class="pink">
        <polygon points="747,341 822,306 825,320 829,334 763,364"/>
        <polygon points="719,431 751,417 755,425 755,437 750,438 749,443 714,446 713,434"/>
        <polygon class="thick" points="643,483 693,458 709,453 713,457 734,466 653,504"/>
        <polygon points="740,507 752,504 753,506 772,501 777,504 772,507 742,513"/>
        <polygon points="779,500 805,490 813,499 803,508 795,507"/>
        <path d="M790 497l15-6 1 5Z"/>
        <polygon points="810,509 840,487 839,493 817,510"/>
        <polygon points="889,502 897,485 918,473 918,499 902,505 896,510 892,508"/>
        <polygon points="859,520 868,518 870,522 867,525 861,528"/>
        <polygon points="786,558 809,541 847,603 816,611"/>
        <polygon points="837,562 852,554 874,589 859,598"/>
        <polygon points="673,594 736,564 740,573 678,603"/>
        <polygon points="812,616 827,612 844,644 833,652"/>
        <polygon points="844,608 859,603 868,619 866,630 861,634"/>
        <polygon points="891,624 918,608 918,694 909,697"/>
        <polygon points="912,696 918,694 918,717"/>
        <polygon points="902,758 918,755 918,798 915,798"/>
        <polygon points="637,656 702,630 710,632 717,637 710,642 693,653 685,662 675,675 663,680 646,687"/>
        <path d="M640 655l7 31"/>
        <polygon points="640,693 652,688 670,680 679,675 689,691 662,713 650,724 646,719 648,717"/>
        <path d="M643 692l7 25"/>
        <polygon points="651,754 701,712 717,740 702,758 677,787 657,764 654,755"/>
        <polygon points="707,902 732,902 720,906 710,906"/>
      </g>
      <polygon class="yellow" points="671,362 684,349 702,344 751,416 719,431"/>
    </svg>
  </div>
</main>

<div class="ctx">
  <div class="mi"><svg class="mic"><use href="#mzl"/></svg><span>Auf den Layer <u>z</u>oomen</span></div>
  <div class="mi"><svg class="mic"><use href="#mzs"/></svg><span>Zur Auswahl <u>z</u>oomen</span></div>
  <div class="mi"><svg class="mic"><use href="#mglass"/></svg><span><u>I</u>n der Übersicht anzeigen</span></div>
  <div class="mi t"><i class="mic"></i>Objektanzahl anzeigen</div>
  <div class="mi t"><i class="mic"></i>Layer kopieren</div>
  <div class="mi t"><i class="mic"></i><span>Layer umbe<u>n</u>ennen</span></div>
  <hr>
  <div class="mi"><svg class="mic"><use href="#mdup"/></svg><span>Layer <u>d</u>uplizieren</span></div>
  <div class="mi"><svg class="mic"><use href="#prem"/></svg><span>Layer <u>l</u>öschen...</span></div>
  <hr>
  <div class="mi"><svg class="mic"><use href="#mtab"/></svg><span><u>A</u>ttributtabelle öffnen</span></div>
  <div class="mi t"><i class="mic"></i><span><u>F</u>ilter...</span></div>
  <div class="mi t"><i class="mic"></i>Datenquelle ändern...</div>
  <hr>
  <div class="mi t"><i class="mic"></i><span class="condensed">Maßstabsabhängige <u>S</u>ichtbarkeit des/der Layer setzen...</span></div>
  <div class="mi t arrow"><i class="mic"></i>KBS setzen</div>
  <hr>
  <div class="mi t arrow sel"><i class="mic"></i>Exportieren</div>
  <hr>
  <div class="mi t arrow"><i class="mic"></i>Stile</div>
  <div class="mi t"><i class="mic"></i><span>Eige<u>n</u>schaften...</span></div>
</div>

<div class="sub-menu">
  <div class="si">Objekte speichern als...</div>
  <div class="si sel">Gewählte Objekte speichern als...</div>
  <div class="si">Als Layerdefinitionsdatei speichern...</div>
  <div class="si">Als QGIS-Layerstildatei speichern...</div>
</div>

<svg class="cursor" viewBox="0 0 13 20"><path d="M.5.500V16l3.500-3.500 3 6.500 2.500-1-3-6.500H11.500Z" fill="#fff" stroke="#000"/></svg>
</body>
</html>
```

FILE: styles.css
```
* { box-sizing: border-box; }
html, body { margin: 0; padding: 0; }
body {
  width: 918px;
  height: 954px;
  overflow: hidden;
  position: relative;
  display: flex;
  flex-direction: column;
  background: #333;
  font-family: Roboto, "Liberation Sans", sans-serif;
  font-size: 12px;
  letter-spacing: -.13px;
  color: #b0b0b0;
}
.defs { width: 0; height: 0; flex: none; display: block; }
.t { font-family: "Liberation Sans", sans-serif; letter-spacing: 0; }
.b { font-weight: 700; }
.ts { font-family: "Liberation Serif", serif; font-style: italic; font-weight: 700; }

.titlebar {
  height: 23px;
  flex: none;
  background: #fff;
  color: #222;
  display: flex;
  align-items: center;
  padding-left: 1px;
  gap: 4px;
  font-size: 12px;
}
.logo { width: 18px; height: 18px; }

.menubar {
  height: 22px;
  flex: none;
  display: flex;
  align-items: center;
  gap: 14.200px;
  padding-left: 10px;
  color: #aaa;
  white-space: nowrap;
}

.tb { display: flex; align-items: center; flex: none; height: 32px; width: 960px; padding-left: 4px; }
.tb1 { margin-top: 1px; }
.tb2 { margin-top: 6px; }
.tb3 { margin-top: 8px; }
.tb i, .ptb i { display: block; flex: none; }
.hd { display: block; flex: none; width: 2px; height: 12px; background: #555; }
.hd.dk { background: #444; }
.ic { display: block; flex: none; width: 26px; height: 26px; margin: 0 4px; }
.ic.nr { margin-right: 0; }
.ic.on { width: 34px; height: 33px; margin: 0; padding: 2px 3px; border: 1px solid #d9801a; }
.sp { display: flex !important; align-items: center; justify-content: center; }
.w2 { width: 2px; }
.w3 { width: 3px; }
.w5 { width: 5px; }
.w8 { width: 8px; }
.w10 { width: 10px; }
.w11 { width: 11px; }
.w12 { width: 12px; }
.w16 { width: 16px; }
.ar { height: 6px; }
.ar::after {
  content: "";
  display: block;
  width: 0;
  margin: 0 auto;
  border-left: 3.500px solid transparent;
  border-right: 3.500px solid transparent;
  border-top: 5px solid #bbb;
}
.h-search { margin-left: 7px; }
.search {
  width: 112px;
  height: 22px;
  flex: none;
  margin-left: 1px;
  background: #7f7f7f;
  border: 1px solid #111;
  color: #3f3f3f;
  font-size: 11px;
  line-height: 20px;
  padding-left: 3px;
  white-space: nowrap;
  overflow: hidden;
}
.gapb { margin-left: 6px; }
.ic.share { margin-left: 5px; }
.h-wisc { margin-left: 7px; }

.work { flex: 1; display: flex; min-height: 0; margin-top: 5px; }
.side { width: 381px; flex: none; display: flex; flex-direction: column; min-height: 0; }
.split { width: 8px; flex: none; background: #333; }
.map { flex: 1; background: #fff; min-width: 0; }
.mapsvg { display: block; width: 529px; height: 793px; }
.pink polygon, .pink path { fill: #e05a8a; stroke: #3d3d3d; stroke-width: .8; }
.pink polygon.thick { stroke-width: 1.300; }
.yellow { fill: #ff0; stroke: #333; stroke-width: .8; }

.dock-title { height: 18px; flex: none; display: flex; align-items: center; color: #a8a8a8; }
.dock-title.second { margin-top: 8px; }
.dock-title span { width: 356px; text-align: center; }
.float {
  display: block;
  width: 10px;
  height: 10px;
  margin-left: 13px;
  border: 1px solid #555;
  background: linear-gradient(45deg, transparent 44%, #555 44%, #555 56%, transparent 56%);
}
.ptb { display: flex; align-items: center; flex: none; padding-left: 2px; height: 25px; }
.ptb-b { margin-top: 2px; margin-bottom: 3px; }
.ptb-l { margin-top: 2px; margin-bottom: 3px; padding-left: 3px; }
.pi { display: block; flex: none; width: 18px; height: 18px; margin: 0 4px; }
.pi.on { width: 25px; height: 25px; margin: 0; padding: 3px; border: 1px solid #d9801a; }
.ptb-l .pi.on + .pi { margin-left: 4px; }
.pi.tight { margin-left: 9px; }
.ptb .ar.w10 { margin-left: 2px; }

.tree { background: #1f1f1f; border: 1px solid #5a5a5a; flex: none; }
.browser { height: 203px; display: flex; overflow: hidden; }
.rows { list-style: none; margin: 0; padding: 2px 0 0; flex: 1; min-width: 0; }
.row { height: 18px; display: flex; align-items: center; color: #c8c8c8; white-space: nowrap; padding-left: 9px; }
.row.sub { padding-left: 29px; }
.tw {
  width: 0;
  height: 0;
  margin-right: 12px;
  border-left: 5px solid #666;
  border-top: 3.500px solid transparent;
  border-bottom: 3.500px solid transparent;
  flex: none;
  display: block;
}
.tw.open { border-left: 3.500px solid transparent; border-right: 3.500px solid transparent; border-top: 5px solid #666; border-bottom: 0; margin-right: 12px; margin-left: -1px; }
.tw.none { border-left-color: transparent; }
.ti { display: block; flex: none; width: 18px; height: 18px; margin-right: 4px; margin-left: -2px; }
.scroll { width: 11px; flex: none; background: #555; border: 1px solid #2a2a2a; }
.thumb { height: 27px; background: #333; border-bottom: 1px solid #555; }

.layers { flex: 1; min-height: 0; padding: 1px 0 0 1px; border-bottom: 0; }
.layer-row {
  height: 24px;
  background: #0e6b00;
  display: flex;
  align-items: center;
  white-space: nowrap;
  overflow: hidden;
}
.eye { width: 18px; height: 20px; margin-left: 23px; border: 1px solid #263; display: flex; align-items: center; justify-content: center; background: #0d5a00; flex: none; }
.eye svg { width: 16px; height: 16px; display: block; }
.swatch { width: 16px; height: 16px; background: #e0646c; border: 1px solid #999; margin-left: 6px; flex: none; }
.lname { margin-left: 6px; color: #f2f2f2; font-weight: 500; text-decoration: underline; letter-spacing: -.05px; }

.ctx, .sub-menu {
  position: absolute;
  background: #333;
  border: 1px solid #1d1d1d;
  box-shadow: 3px 3px 4px rgba(0, 0, 0, .45);
  color: #aaa;
  white-space: nowrap;
}
.ctx { left: 247px; top: 483px; width: 350px; padding: 5px 5px 3px 3px; }
.sub-menu { left: 591px; top: 800px; width: 252px; padding: 5px 4px 2px 4px; }
.mi { height: 24px; display: flex; align-items: center; position: relative; }
.mi.t { height: 23px; padding-bottom: 1px; }
.mic { display: block; width: 18px; height: 18px; margin: 0 7px 0 0; flex: none; }
.condensed { letter-spacing: -.3px; }
.mi.sel, .si.sel { background: #0e6b00; color: #b4c4a8; }
.arrow::after {
  content: "";
  position: absolute;
  right: 5px;
  top: 7px;
  border-left: 4px solid #777;
  border-top: 4px solid transparent;
  border-bottom: 4px solid transparent;
}
.ctx hr { border: 0; height: 1px; background: #555; margin: 1px 5px 1px 10px; }
.si { height: 23px; line-height: 23px; padding-left: 25px; }
.cursor { position: absolute; left: 829px; top: 842px; width: 13px; height: 20px; }
u { text-underline-offset: 2px; }
```
